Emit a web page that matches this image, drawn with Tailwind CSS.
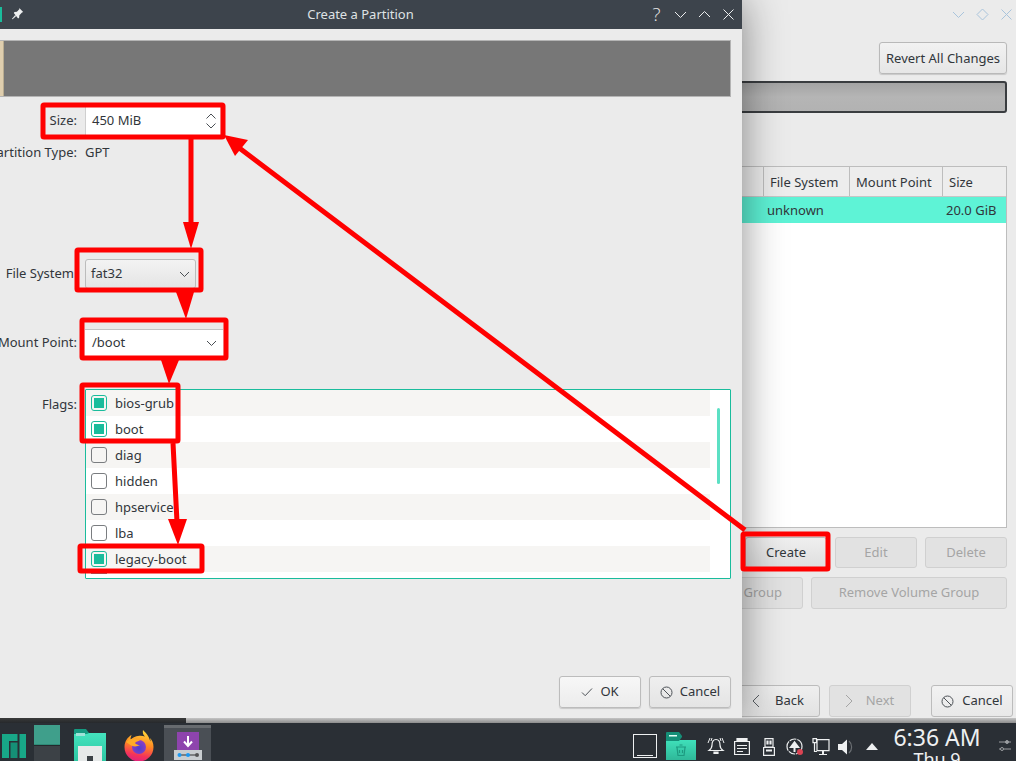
<!DOCTYPE html>
<html>
<head>
<meta charset="utf-8">
<script src="https://cdn.jsdelivr.net/npm/@tailwindcss/browser@4"></script>
</head>
<body class="m-0">
<div class="relative w-[1016px] h-[761px] overflow-hidden bg-[#ebebeb] font-['Noto_Sans','Open_Sans',sans-serif] text-[13px] text-[#31363b]">

  <!-- background window -->
  <div class="absolute left-0 top-0 w-[1016px] h-[718px] bg-[#ebebeb]">
    <div class="flex justify-end gap-[9px] pt-[7px] pr-[2px] h-[29px] text-[#a9c4dc]">
      <svg class="w-[15px] h-[15px]" viewBox="0 0 15 15" fill="none" stroke="currentColor" stroke-width="1"><path d="M2 5l5.500 5.500L13 5"/></svg>
      <svg class="w-[15px] h-[15px]" viewBox="0 0 15 15" fill="none" stroke="currentColor" stroke-width="1"><path d="M7.500 2L13 7.500 7.500 13 2 7.500z"/></svg>
      <svg class="w-[15px] h-[15px]" viewBox="0 0 15 15" fill="none" stroke="currentColor" stroke-width="1"><path d="M2.500 2.500l10 10M12.500 2.500l-10 10"/></svg>
    </div>
    <div class="flex justify-end pr-[9px] pt-[13px]">
      <div class="w-[128px] h-[32px] pt-[2px] flex items-center justify-center rounded-[3px] border border-[#b9b9b9] bg-gradient-to-b from-[#f2f2f2] to-[#e6e6e6] shadow-[0_1px_1px_rgba(0,0,0,0.15)]">Revert All Changes</div>
    </div>
    <div class="ml-[600px] mr-[9px] mt-[7px] h-[32px] rounded-[3px] border-2 border-[#3a3d40] bg-gradient-to-b from-[#a4a4a4] via-[#b5b5b5] to-[#b2b2b2]"></div>
    <div class="ml-[600px] mr-[9px] mt-[53px] h-[362px] border border-[#bdbdbd] bg-white flex flex-col">
      <div class="h-[30px] flex bg-[#ededed] border-b border-[#c6c6c6] shrink-0">
        <div class="w-[163px] border-r border-[#bdbdbd]"></div>
        <div class="w-[86px] border-r border-[#bdbdbd] flex items-center pl-[6px] pt-[2px]">File System</div>
        <div class="w-[93px] border-r border-[#bdbdbd] flex items-center pl-[6px] pt-[2px]">Mount Point</div>
        <div class="flex-1 flex items-center pl-[6px] pt-[2px]">Size</div>
      </div>
      <div class="h-[26px] pt-[2px] flex items-center bg-[#5ef3d6] shrink-0">
        <div class="w-[166px]"></div>
        <div class="w-[179px]">unknown</div>
        <div class="flex-1">20.0 GiB</div>
      </div>
    </div>
    <div class="flex justify-end gap-[8px] mr-[9px] mt-[9px]">
      <div class="w-[82px] h-[31px] flex items-center justify-center rounded-[3px] border border-[#bcbcbc] bg-gradient-to-b from-[#efefef] to-[#dfdfdf]">Create</div>
      <div class="w-[82px] h-[31px] flex items-center justify-center rounded-[3px] border border-[#d0d0d0] bg-[#e2e2e2] text-[#a5a5a5]">Edit</div>
      <div class="w-[82px] h-[31px] flex items-center justify-center rounded-[3px] border border-[#d0d0d0] bg-[#e2e2e2] text-[#a5a5a5]">Delete</div>
    </div>
    <div class="flex justify-end gap-[8px] mr-[9px] mt-[9px]">
      <div class="w-[100px] h-[32px] flex items-center justify-end pr-[20px] rounded-[3px] border border-[#d0d0d0] bg-[#e2e2e2] text-[#a5a5a5]">Group</div>
      <div class="w-[196px] h-[32px] flex items-center justify-center rounded-[3px] border border-[#d0d0d0] bg-[#e2e2e2] text-[#a5a5a5]">Remove Volume Group</div>
    </div>
    <div class="flex justify-end mr-[3px] mt-[76px]">
      <div class="w-[120px] h-[32px] flex items-center justify-end pr-[15px] gap-[14px] rounded-[3px] border border-[#bcbcbc] bg-gradient-to-b from-[#efefef] to-[#e2e2e2]">
        <svg class="w-[10px] h-[14px]" viewBox="0 0 10 14" fill="none" stroke="#5a5f64" stroke-width="1"><path d="M8 1L2 7l6 6"/></svg><span>Back</span>
      </div>
      <div class="ml-[9px] w-[82px] h-[32px] flex items-center justify-center gap-[12px] pr-[2px] rounded-[3px] border border-[#d0d0d0] bg-[#e2e2e2] text-[#a5a5a5]">
        <svg class="w-[10px] h-[14px]" viewBox="0 0 10 14" fill="none" stroke="#a5a5a5" stroke-width="1"><path d="M2 1l6 6-6 6"/></svg><span>Next</span>
      </div>
      <div class="ml-[20px] w-[82px] h-[32px] flex items-center justify-center gap-[8px] rounded-[3px] border border-[#bcbcbc] bg-gradient-to-b from-[#f2f2f2] to-[#e8e8e8]">
        <svg class="w-[13px] h-[13px]" viewBox="0 0 13 13" fill="none" stroke="#4d5257" stroke-width="1"><circle cx="6.500" cy="6.500" r="5.500"/><path d="M2.700 2.700l7.600 7.600"/></svg><span>Cancel</span>
      </div>
    </div>
  </div>

  <!-- dialog -->
  <div class="absolute left-0 top-0 w-[742px] h-[718px] bg-[#ebebeb] shadow-[0_0_40px_rgba(0,0,0,0.45)] flex flex-col">
    <div class="h-[29px] shrink-0 bg-[#3d444c] text-[#dfe2e4] relative flex items-center justify-center">
      <span class="absolute left-0 top-[7px] w-[2px] h-[15px] bg-[#1abc9c]"></span>
      <svg class="absolute left-[11px] top-[7px] w-[13px] h-[13px]" viewBox="0 0 13 13" fill="#eef0f1"><path d="M8 .8l4.200 4.200-1.200.6-2.600 2.700-.3 2.500-1 .6L2.800 6.100l.7-1 2.400-.3L8.500 2z"/><path d="M4.200 8l1 1-3.500 3.300-.8-.3z"/></svg>
      <span class="pr-[21px]">Create a Partition</span>
      <div class="absolute right-[6px] top-[6px] flex gap-[9px] items-center">
        <span class="w-[15px] text-center text-[19px] leading-[17px] text-[#e8e8e8] font-['Open_Sans',sans-serif] font-light">?</span>
        <svg class="w-[15px] h-[15px]" viewBox="0 0 15 15" fill="none" stroke="#eceeef" stroke-width="1"><path d="M2 5l5.500 5.500L13 5"/></svg>
        <svg class="w-[15px] h-[15px]" viewBox="0 0 15 15" fill="none" stroke="#eceeef" stroke-width="1"><path d="M2 10l5.500-5.500L13 10"/></svg>
        <svg class="w-[15px] h-[15px]" viewBox="0 0 15 15" fill="none" stroke="#eceeef" stroke-width="1"><path d="M2.500 2.500l10 10M12.500 2.500l-10 10"/></svg>
      </div>
    </div>

    <div class="mt-[11px] mr-[11px] h-[57px] shrink-0 flex bg-[#777777] border border-[#b4b4b4] border-l-0">
      <div class="w-[4px] bg-[#dfceae] border-r border-[#b9ac90]"></div>
    </div>

    <div class="mt-[10px] flex items-center h-[28px] shrink-0">
      <div class="w-[77px] flex justify-end whitespace-nowrap">Size:</div>
      <div class="ml-[8px] w-[135px] h-[28px] bg-white flex items-center justify-between pl-[6px] pr-[4px] border-l border-[#cfcfcf]">
        <span>450 MiB</span>
        <svg class="w-[10px] h-[16px]" viewBox="0 0 10 16" fill="none" stroke="#4a4f54" stroke-width="1"><path d="M.5 5.500L5 1l4.500 4.500M.5 10.500L5 15l4.500-4.500"/></svg>
      </div>
    </div>
    <div class="mt-[9px] flex items-center h-[18px] shrink-0">
      <div class="w-[77px] flex justify-end whitespace-nowrap">Partition Type:</div>
      <div class="ml-[8px]">GPT</div>
    </div>

    <div class="mt-[96px] flex items-center h-[32px] shrink-0">
      <div class="w-[74px] flex justify-end whitespace-nowrap">File System</div>
      <div class="ml-[11px] w-[111px] h-[30px] rounded-[3px] border border-[#bcbcbc] bg-gradient-to-b from-[#f3f3f3] to-[#e4e4e4] flex items-center justify-between pl-[5px] pr-[5px]">
        <span>fat32</span>
        <svg class="w-[11px] h-[7px]" viewBox="0 0 11 7" fill="none" stroke="#4a4f54" stroke-width="1"><path d="M1 1l4.500 4.500L10 1"/></svg>
      </div>
    </div>
    <div class="mt-[39px] flex items-center h-[28px] shrink-0">
      <div class="w-[77px] flex justify-end whitespace-nowrap">Mount Point:</div>
      <div class="ml-[8px] w-[138px] h-[28px] bg-white border-t border-[#c4c4c4] flex items-center justify-between pl-[7px] pr-[6px]">
        <span class="-mt-[2px]">/boot</span>
        <svg class="w-[11px] h-[7px]" viewBox="0 0 11 7" fill="none" stroke="#4a4f54" stroke-width="1"><path d="M1 1l4.500 4.500L10 1"/></svg>
      </div>
    </div>

    <div class="mt-[32px] flex shrink-0">
      <div class="w-[77px] flex justify-end whitespace-nowrap pt-[6px]">Flags:</div>
      <div class="ml-[8px] w-[646px] h-[190px] border border-[#1abc9c] bg-white rounded-[1px] relative overflow-hidden">
        <div class="flex flex-col pr-[20px]">
          <div class="h-[26px] bg-[#f6f5f3] flex items-center gap-[8px] pl-[5px]"><span class="w-[16px] h-[16px] rounded-[3px] border border-[#1abc9c] flex items-center justify-center"><span class="w-[10px] h-[10px] bg-[#1abc9c]"></span></span><span class="pt-[2px]">bios-grub</span></div>
          <div class="h-[26px] bg-white flex items-center gap-[8px] pl-[5px]"><span class="w-[16px] h-[16px] rounded-[3px] border border-[#1abc9c] flex items-center justify-center"><span class="w-[10px] h-[10px] bg-[#1abc9c]"></span></span><span class="pt-[2px]">boot</span></div>
          <div class="h-[26px] bg-[#f6f5f3] flex items-center gap-[8px] pl-[5px]"><span class="w-[16px] h-[16px] rounded-[3px] border border-[#7a7d80]"></span><span class="pt-[2px]">diag</span></div>
          <div class="h-[26px] bg-white flex items-center gap-[8px] pl-[5px]"><span class="w-[16px] h-[16px] rounded-[3px] border border-[#7a7d80]"></span><span class="pt-[2px]">hidden</span></div>
          <div class="h-[26px] bg-[#f6f5f3] flex items-center gap-[8px] pl-[5px]"><span class="w-[16px] h-[16px] rounded-[3px] border border-[#7a7d80]"></span><span class="pt-[2px]">hpservice</span></div>
          <div class="h-[26px] bg-white flex items-center gap-[8px] pl-[5px]"><span class="w-[16px] h-[16px] rounded-[3px] border border-[#7a7d80]"></span><span class="pt-[2px]">lba</span></div>
          <div class="h-[26px] bg-[#f6f5f3] flex items-center gap-[8px] pl-[5px]"><span class="w-[16px] h-[16px] rounded-[3px] border border-[#1abc9c] flex items-center justify-center"><span class="w-[10px] h-[10px] bg-[#1abc9c]"></span></span><span class="border-b border-[#1abc9c] pr-[3px] -ml-[3px] pl-[3px] pt-[2px] leading-[19px]">legacy-boot</span></div>
          <div class="h-[26px] bg-white flex items-start pl-[5px]"><span class="w-[16px] h-[2px] bg-[#7a7d80]"></span></div>
        </div>
        <span class="absolute right-[10px] top-[18px] w-[3px] h-[76px] bg-[#5ce0c4] rounded-[2px]"></span>
      </div>
    </div>

    <div class="mt-[97px] flex justify-end gap-[8px] pr-[11px] shrink-0">
      <div class="w-[82px] h-[32px] flex items-center justify-center gap-[7px] rounded-[3px] border border-[#bcbcbc] bg-gradient-to-b from-[#f7f7f7] to-[#ececec] shadow-[0_1px_1px_rgba(0,0,0,0.15)]">
        <svg class="w-[12px] h-[10px]" viewBox="0 0 12 10" fill="none" stroke="#4d5257" stroke-width="1"><path d="M1 5.500l3.200 3.200L11 1.500"/></svg><span>OK</span>
      </div>
      <div class="w-[82px] h-[32px] flex items-center justify-center gap-[7px] rounded-[3px] border border-[#bcbcbc] bg-gradient-to-b from-[#efefef] to-[#e4e4e4] shadow-[0_1px_1px_rgba(0,0,0,0.15)]">
        <svg class="w-[13px] h-[13px]" viewBox="0 0 13 13" fill="none" stroke="#4d5257" stroke-width="1"><circle cx="6.500" cy="6.500" r="5.500"/><path d="M2.700 2.700l7.600 7.600"/></svg><span>Cancel</span>
      </div>
    </div>
  </div>

  <!-- strip above the panel -->
  <div class="absolute left-0 top-[718px] w-[1016px] h-[5px] flex">
    <div class="w-[186px] bg-gradient-to-b from-[#3a3a3a] to-[#26292c]"></div>
    <div class="flex-1 bg-gradient-to-b from-[#c4c4c4] to-[#8d8d8d]"></div>
  </div>

  <!-- panel -->
  <div class="absolute left-0 top-[723px] w-[1016px] h-[38px] bg-[#2a2f35] flex items-start overflow-hidden">
    <svg class="ml-[2px] mt-[11px] w-[24px] h-[24px]" viewBox="0 0 24 24" fill="#18a888"><path d="M0 0h15.500v7H7v17H0z"/><path d="M8.500 8.500h7V24h-7z" fill="#158f76"/><path d="M17.500 0H24v24h-6.500z"/></svg>
    <div class="ml-[8px] mt-[2px] w-[26px] flex flex-col">
      <div class="h-[20px] bg-[#3f9f8b] border-b border-[#2f8a77]"></div>
      <div class="h-[16px] bg-[#3c4146] border-t border-[#24282c]"></div>
    </div>
    <svg class="ml-[14px] mt-[6px] w-[32px] h-[32px]" viewBox="0 0 32 32">
      <defs><linearGradient id="fo" x1="0" y1="0" x2="0" y2="1"><stop offset="0" stop-color="#44e3be"/><stop offset="1" stop-color="#2cc7a3"/></linearGradient></defs>
      <path d="M0 1a1 1 0 011-1h11l3 4v6H0z" fill="#159a80"/><path d="M0 5h13l2-1h17v28H0z" fill="url(#fo)"/>
      <rect x="2" y="4" width="9" height="3" fill="#9fe3d8"/>
      <path d="M4 17h24v15H19v-5h-6v5H4z" fill="#e6e9e9"/><path d="M13 27h6v5h-6z" fill="#3b4146"/>
    </svg>
    <svg class="ml-[18px] mt-[7px] w-[30px] h-[31px]" viewBox="0 0 30 31">
      <defs>
        <linearGradient id="fx" x1="0.600" y1="0" x2="0.400" y2="1"><stop offset="0" stop-color="#ffd93a"/><stop offset=".45" stop-color="#ff8a22"/><stop offset=".8" stop-color="#f5325a"/><stop offset="1" stop-color="#e0217f"/></linearGradient>
        <radialGradient id="gl" cx=".5" cy=".6" r=".6"><stop offset="0" stop-color="#4a3fd0"/><stop offset="1" stop-color="#8f3fc4"/></radialGradient>
      </defs>
      <path d="M19 0c-.5 3 0 5 2 6.500-1.500-.5-3.500-1-5.500-.8C11 6 8 8 6.500 10c0-2 .5-3.500 1-5C4 7 .5 11 .5 17a14.500 14.500 0 0029 0c0-4-1.500-7-3.500-9 .5 1.500.5 2.500.3 3.500C25 6 22 3 19 0z" fill="url(#fx)"/>
      <circle cx="15" cy="17" r="7" fill="url(#gl)"/>
      <path d="M2 12c3-3 6-4 9-3 2 .5 4 1 5 2-2 0-4 .5-5 2 1 1.500 3 2 5 2-3 2-8 2-11-1z" fill="#ffab27"/>
    </svg>
    <div class="ml-[10px] mt-[2px] w-[47px] h-[36px] bg-[#4a4f55] border-t-[3px] border-[#676b6f] flex justify-center">
      <div class="relative w-[28px] mt-[4px]">
        <div class="absolute left-[3px] top-0 w-[22px] h-[22px] bg-[#8e44ad] flex items-start justify-center pt-[4px]">
          <svg class="w-[12px] h-[12px]" viewBox="0 0 12 12" fill="none" stroke="#fff" stroke-width="2"><path d="M6 0v9M2 5.500L6 10l4-4.500"/></svg>
        </div>
        <div class="absolute left-0 top-[18px] w-[28px] h-[10px] bg-[#c9cdd0] flex items-center px-[3px]">
          <svg class="w-full h-[6px]" viewBox="0 0 22 6"><path d="M1 3h20" stroke="#333" stroke-width="1"/><circle cx="2.500" cy="3" r="2" fill="#1d99f3"/><circle cx="11" cy="3" r="2" fill="#1d99f3"/><circle cx="20" cy="3" r="2" fill="#555"/></svg>
        </div>
      </div>
    </div>

    <div class="ml-auto mr-[4px] flex items-start">
      <div class="mt-[11px] w-[24px] h-[24px] border border-[#eef0f1] flex flex-col justify-end px-[3px] pb-[1px]"><span class="h-[1px] bg-[#eef0f1]"></span></div>
      <svg class="ml-[9px] mt-[9px] w-[30px] h-[28px]" viewBox="0 0 30 28">
        <defs><linearGradient id="ft" x1="0" y1="0" x2="0" y2="1"><stop offset="0" stop-color="#3fe0ba"/><stop offset="1" stop-color="#2fb899"/></linearGradient></defs>
        <path d="M0 8h30v20H0z" fill="url(#ft)"/><path d="M0 1a1 1 0 011-1h12l3 4v1l-3 4H0z" fill="#158f78"/><rect x="3" y="3" width="8" height="1.500" fill="#e3fff8"/>
        <path d="M10 15h10M11 15.500l1 8h6l1-8M13.500 13h3M13.500 18v3M16.500 18v3" fill="none" stroke="#1d9a80" stroke-width="1.200"/>
      </svg>
      <svg class="ml-[11px] mt-[14px] w-[18px] h-[18px]" viewBox="0 0 18 18" fill="none" stroke="#eef0f1" stroke-width="1.200"><path d="M9 2.500c-3 0-4 2.500-4 5.500s-1 4-3 5.500h14c-2-1.500-3-2.500-3-5.500s-1-5.500-4-5.500z"/><path d="M7 15h4v1.500H7z" fill="#eef0f1"/><path d="M3 1L1 6M15 1l2 5M5 1L4 4M13 1l1 3" stroke-width="1"/></svg>
      <svg class="ml-[9px] mt-[15px] w-[16px] h-[17px]" viewBox="0 0 16 17" fill="none" stroke="#eef0f1" stroke-width="1.200"><path d="M3 3V.6h10V3" fill="#eef0f1"/><path d="M.6 3.500h14.800v13H.6z"/><path d="M3 7.500h10M3 10.500h10M3 13.500h6"/></svg>
      <svg class="ml-[13px] mt-[15px] w-[12px] h-[18px]" viewBox="0 0 12 18" fill="none" stroke="#eef0f1" stroke-width="1.200"><path d="M2 .6h8V9H2zM.6 9.500h10.800v7.900H.6z"/><path d="M4 3h1v3H4zM7 3h1v3H7z" fill="#eef0f1"/><path d="M3 12.500h6" stroke-width="2"/></svg>
      <svg class="ml-[11px] mt-[15px] w-[18px] h-[18px]" viewBox="0 0 18 18" fill="none"><circle cx="8.500" cy="8.500" r="7.500" stroke="#eef0f1" stroke-width="1.200" stroke-dasharray="10 1 7 1"/><path d="M8.500 14V8M5 9l3.500-4.500L12 9z" stroke="#eef0f1" stroke-width="2" fill="#eef0f1"/><circle cx="14" cy="14" r="3" fill="#da4453"/></svg>
      <svg class="ml-[8px] mt-[15px] w-[18px] h-[18px]" viewBox="0 0 18 18" fill="none" stroke="#eef0f1" stroke-width="1.200"><path d="M5 1.600h12v11H5z"/><path d="M1 .6h3.500v4H1zM2.500 5v8.500H5M7 16.500h8" /><path d="M11 12.500v4" stroke-width="2"/></svg>
      <svg class="ml-[8px] mt-[15px] w-[17px] h-[18px]" viewBox="0 0 17 18"><path d="M0 6h4l5-4.500v15L4 12H0z" fill="#eef0f1"/><path d="M11 3c3.500 3 3.500 9 0 12" fill="none" stroke="#6a6e72" stroke-width="1.200"/></svg>
      <svg class="ml-[11px] mt-[20px] w-[12px] h-[7px]" viewBox="0 0 12 7" fill="#eef0f1"><path d="M6 0l6 7H0z"/></svg>
      <div class="ml-[15px] w-[88px] flex flex-col items-center text-[#eef0f1] whitespace-nowrap">
        <span class="text-[23px] leading-[28px]">6:36 AM</span>
        <span class="text-[18px] leading-[16px]">Thu 9</span>
      </div>
      <svg class="mt-[16px] ml-[17px] w-[14px] h-[14px]" viewBox="0 0 14 14" fill="none" stroke="#9a9da0" stroke-width="1"><path d="M1 3h12M1 10h12"/><circle cx="9" cy="3" r="1.500" fill="#9a9da0"/><circle cx="4" cy="10" r="1.500" fill="#2a2f35"/></svg>
    </div>
  </div>

  <!-- red annotations -->
  <svg class="absolute left-0 top-0 w-[1016px] h-[761px] pointer-events-none" viewBox="0 0 1016 761" fill="none" stroke="#ff0000" stroke-width="5" stroke-linejoin="round">
    <rect x="43" y="105" width="180" height="32" rx="1"/>
    <rect x="77" y="250" width="124" height="40" rx="1"/>
    <rect x="82" y="320" width="144" height="38" rx="1"/>
    <rect x="82" y="385" width="96" height="56" rx="1"/>
    <rect x="80" y="546" width="122" height="25" rx="1"/>
    <rect x="743" y="534" width="85" height="35" rx="1"/>
    <path d="M191 138V225M173 443L177 522M745 530L238 147"/>
    <g fill="#ff0000" stroke="none">
      <path d="M183 222H199L191 249z"/>
      <path d="M176 292H194L186 319z"/>
      <path d="M161 360H179L169 384z"/>
      <path d="M168 519H187L178 545z"/>
      <path d="M224 135L235 156 248 140z"/>
    </g>
  </svg>
</div>
</body>
</html>
